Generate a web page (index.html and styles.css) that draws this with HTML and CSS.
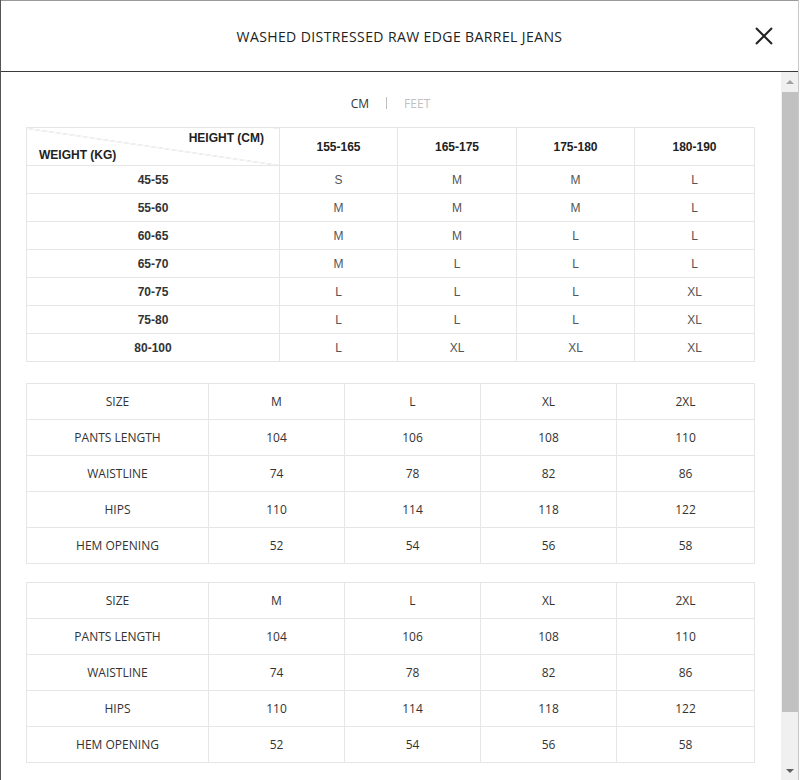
FILE: index.html
```html
<!DOCTYPE html>
<html>
<head>
<meta charset="utf-8">
<link rel="stylesheet" href="styles.css">
</head>
<body>
<div class="modal">
  <header class="header">
    <div></div>
    <h1 class="title">WASHED DISTRESSED RAW EDGE BARREL JEANS</h1>
    <button class="close" aria-label="Close">
      <svg width="20" height="20" viewBox="0 0 20 20"><path d="M2 2 L18 18 M18 2 L2 18" stroke="#222" stroke-width="2" fill="none"/></svg>
    </button>
  </header>
  <div class="body">
    <div class="content">
      <div class="units">
        <span class="unit active">CM</span>
        <span class="divider"></span>
        <span class="unit">FEET</span>
      </div>

      <table class="chart">
        <colgroup><col style="width:253px"><col style="width:118px"><col style="width:119px"><col style="width:118px"><col style="width:120px"></colgroup>
        <thead>
          <tr>
            <th class="diag"><span class="h-right">HEIGHT (CM)</span><span class="h-left">WEIGHT (KG)</span></th>
            <th>155-165</th><th>165-175</th><th>175-180</th><th>180-190</th>
          </tr>
        </thead>
        <tbody>
          <tr><th>45-55</th><td>S</td><td>M</td><td>M</td><td>L</td></tr>
          <tr><th>55-60</th><td>M</td><td>M</td><td>M</td><td>L</td></tr>
          <tr><th>60-65</th><td>M</td><td>M</td><td>L</td><td>L</td></tr>
          <tr><th>65-70</th><td>M</td><td>L</td><td>L</td><td>L</td></tr>
          <tr><th>70-75</th><td>L</td><td>L</td><td>L</td><td>XL</td></tr>
          <tr><th>75-80</th><td>L</td><td>L</td><td>L</td><td>XL</td></tr>
          <tr><th>80-100</th><td>L</td><td>XL</td><td>XL</td><td>XL</td></tr>
        </tbody>
      </table>

      <table class="sizes first">
        <colgroup><col style="width:182px"><col style="width:136px"><col style="width:136px"><col style="width:136px"><col style="width:138px"></colgroup>
        <tr><td>SIZE</td><td>M</td><td>L</td><td>XL</td><td>2XL</td></tr>
        <tr><td>PANTS LENGTH</td><td>104</td><td>106</td><td>108</td><td>110</td></tr>
        <tr><td>WAISTLINE</td><td>74</td><td>78</td><td>82</td><td>86</td></tr>
        <tr><td>HIPS</td><td>110</td><td>114</td><td>118</td><td>122</td></tr>
        <tr><td>HEM OPENING</td><td>52</td><td>54</td><td>56</td><td>58</td></tr>
      </table>

      <table class="sizes second">
        <colgroup><col style="width:182px"><col style="width:136px"><col style="width:136px"><col style="width:136px"><col style="width:138px"></colgroup>
        <tr><td>SIZE</td><td>M</td><td>L</td><td>XL</td><td>2XL</td></tr>
        <tr><td>PANTS LENGTH</td><td>104</td><td>106</td><td>108</td><td>110</td></tr>
        <tr><td>WAISTLINE</td><td>74</td><td>78</td><td>82</td><td>86</td></tr>
        <tr><td>HIPS</td><td>110</td><td>114</td><td>118</td><td>122</td></tr>
        <tr><td>HEM OPENING</td><td>52</td><td>54</td><td>56</td><td>58</td></tr>
      </table>
    </div>
    <div class="scrollbar">
      <div class="sb-btn"><span class="arrow up"></span></div>
      <div class="sb-track"><div class="sb-thumb"></div></div>
      <div class="sb-btn"><span class="arrow down"></span></div>
    </div>
  </div>
</div>
</body>
</html>
```

FILE: styles.css
```css
* { box-sizing: border-box; }
html, body { margin: 0; padding: 0; background: #fff; }
body { overflow: hidden; font-family: "Open Sans", "Noto Sans", sans-serif; color: #333; }

.modal {
  width: 799px;
  height: 780px;
  border-left: 1px solid #555;
  border-right: 1px solid #c8c8c8;
  display: flex;
  flex-direction: column;
  background: #fff;
}

.header {
  height: 72px;
  flex: none;
  border-top: 1px solid #9a9a9a;
  border-bottom: 1px solid #3a3a3a;
  display: grid;
  grid-template-columns: 1fr auto 1fr;
  align-items: center;
}
.title {
  margin: 0;
  font-size: 14px;
  font-weight: 400;
  color: #222;
  letter-spacing: 0.4px;
  padding-top: 1px;
}
.close {
  justify-self: end;
  margin-right: 24px;
  width: 20px;
  height: 20px;
  padding: 0;
  border: 0;
  background: none;
  display: flex;
}

.body {
  flex: 1;
  display: flex;
  min-height: 0;
}
.content {
  flex: 1;
  overflow: hidden;
  padding: 0 26px 0 25px;
}

.units {
  display: flex;
  justify-content: center;
  align-items: flex-start;
  gap: 17px;
  padding-top: 24px;
  height: 55px;
  font-size: 12px;
  line-height: 16px;
}
.unit { color: #c0c0c0; }
.unit.active { color: #333; }
.divider {
  width: 1px;
  height: 12px;
  margin-top: 1px;
  background: #bdbdbd;
}

table {
  border-collapse: collapse;
  table-layout: fixed;
  width: 728px;
}
td, th {
  border: 1px solid #e6e6e6;
  text-align: center;
  padding: 0;
}

.chart {
  font-family: "Liberation Sans", Arial, sans-serif;
  font-size: 12px;
}
.chart thead th {
  height: 37px;
  font-weight: 700;
  color: #222;
  padding-top: 1px;
}
.chart tbody tr { height: 28px; }
.chart tbody th {
  font-weight: 700;
  color: #333;
}
.chart tbody td { color: #555; }
.chart th.diag {
  padding: 2px 15px 1px 12px;
  line-height: 17px;
  background-image: linear-gradient(to top right, transparent calc(50% - 0.6px), #d6d6d6 50%, transparent calc(50% + 0.6px));
}
.h-right { display: block; text-align: right; }
.h-left { display: block; text-align: left; }

.sizes {
  font-family: "Open Sans", "Noto Sans", sans-serif;
  font-size: 12px;
  color: #333;
}
.sizes tr { height: 36px; }
.sizes.first { margin-top: 21px; }
.sizes.second { margin-top: 18px; }

.scrollbar {
  width: 17px;
  flex: none;
  background: #f0f0f0;
  display: flex;
  flex-direction: column;
}
.sb-btn {
  height: 17px;
  display: flex;
  align-items: center;
  justify-content: center;
  flex: none;
}
.arrow {
  width: 0;
  height: 0;
  border-left: 4px solid transparent;
  border-right: 4px solid transparent;
}
.arrow.up { border-bottom: 4px solid #a3a3a3; margin-top: 2px; }
.arrow.down { border-top: 4px solid #606060; margin-top: -2px; }
.sb-track {
  flex: 1;
  padding: 3px 0 51px 1px;
  display: flex;
}
.sb-thumb {
  flex: 1;
  background: #c1c1c1;
}
```
